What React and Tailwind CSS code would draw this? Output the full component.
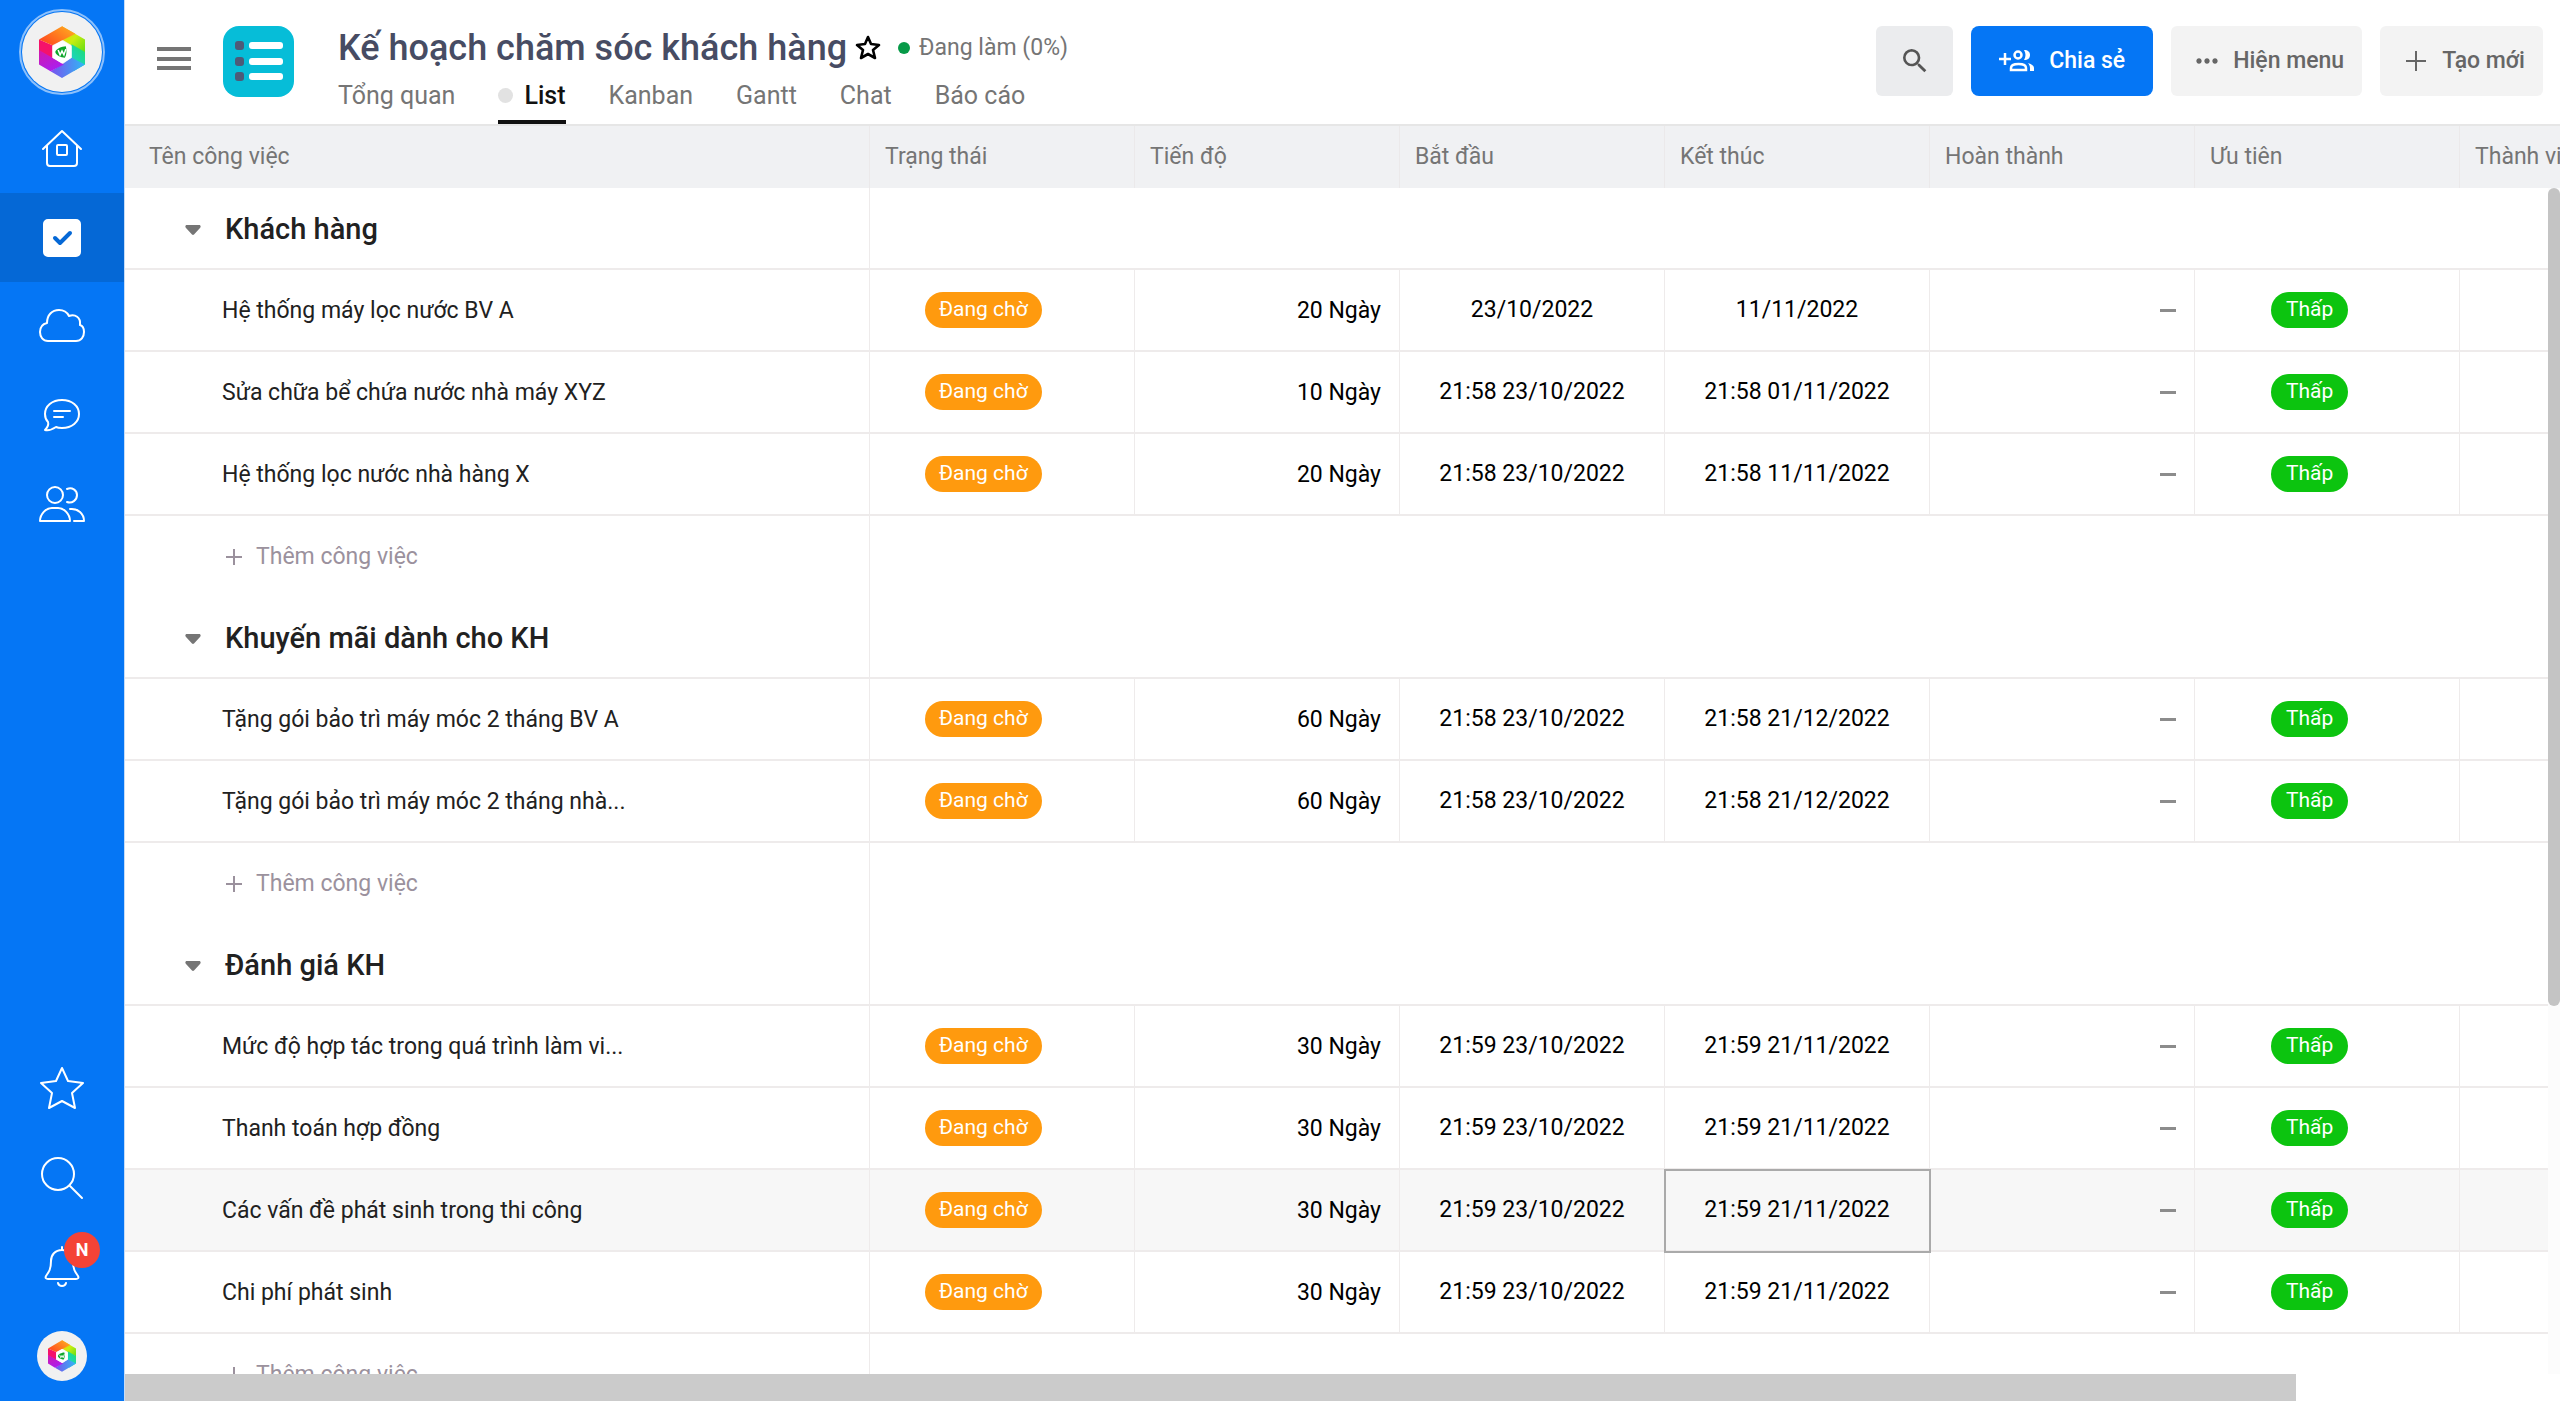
import { useState } from 'react';
import { MdSearch, MdMoreHoriz } from 'react-icons/md';

const columns = ['Trạng thái', 'Tiến độ', 'Bắt đầu', 'Kết thúc', 'Hoàn thành', 'Ưu tiên', 'Thành viên'];

const tabs = ['Tổng quan', 'List', 'Kanban', 'Gantt', 'Chat', 'Báo cáo'];

const groups = [
  {
    title: 'Khách hàng',
    tasks: [
      { name: 'Hệ thống máy lọc nước BV A', days: 20, start: '23/10/2022', end: '11/11/2022' },
      { name: 'Sửa chữa bể chứa nước nhà máy XYZ', days: 10, start: '21:58 23/10/2022', end: '21:58 01/11/2022' },
      { name: 'Hệ thống lọc nước nhà hàng X', days: 20, start: '21:58 23/10/2022', end: '21:58 11/11/2022' },
    ],
  },
  {
    title: 'Khuyến mãi dành cho KH',
    tasks: [
      { name: 'Tặng gói bảo trì máy móc 2 tháng BV A', days: 60, start: '21:58 23/10/2022', end: '21:58 21/12/2022' },
      { name: 'Tặng gói bảo trì máy móc 2 tháng nhà...', days: 60, start: '21:58 23/10/2022', end: '21:58 21/12/2022' },
    ],
  },
  {
    title: 'Đánh giá KH',
    tasks: [
      { name: 'Mức độ hợp tác trong quá trình làm vi...', days: 30, start: '21:59 23/10/2022', end: '21:59 21/11/2022' },
      { name: 'Thanh toán hợp đồng', days: 30, start: '21:59 23/10/2022', end: '21:59 21/11/2022' },
      { name: 'Các vấn đề phát sinh trong thi công', days: 30, start: '21:59 23/10/2022', end: '21:59 21/11/2022', active: true },
      { name: 'Chi phí phát sinh', days: 30, start: '21:59 23/10/2022', end: '21:59 21/11/2022' },
    ],
  },
];

function Logo({ className }) {
  return (
    <svg viewBox="0 0 48 54" className={className} aria-hidden="true">
      <defs>
        <linearGradient id="lg-top" x1="0" y1="1" x2="1" y2="0.3">
          <stop offset="0" stopColor="#ff3d1f" />
          <stop offset="1" stopColor="#ffa51f" />
        </linearGradient>
        <linearGradient id="lg-right" x1="0" y1="0" x2="1" y2="1">
          <stop offset="0" stopColor="#ffc400" />
          <stop offset="0.5" stopColor="#c9ee10" />
          <stop offset="1" stopColor="#5fdc13" />
        </linearGradient>
        <linearGradient id="lg-low" x1="0" y1="1" x2="0.6" y2="0">
          <stop offset="0" stopColor="#19cfe6" />
          <stop offset="1" stopColor="#1fdc7a" />
        </linearGradient>
        <linearGradient id="lg-bottom" x1="0" y1="0" x2="1" y2="0">
          <stop offset="0" stopColor="#7a52ee" />
          <stop offset="1" stopColor="#2fb8f5" />
        </linearGradient>
        <linearGradient id="lg-left" x1="0" y1="0" x2="0.6" y2="1">
          <stop offset="0" stopColor="#d517a8" />
          <stop offset="1" stopColor="#a81ff2" />
        </linearGradient>
      </defs>
      <path d="M0 14 14 20V34L0 26z" fill="#f5126a" />
      <path d="M24 0 48 14V28L34 20 24 14z" fill="url(#lg-right)" />
      <path d="M24 0 38 8 14 20 0 14z" fill="url(#lg-top)" />
      <path d="M48 27V40L36 47 34 34V19z" fill="url(#lg-low)" />
      <path d="M24 54 48 40 34 33 24 40 12 47z" fill="url(#lg-bottom)" />
      <path d="M0 25 14 33 26 40 12 47 0 40z" fill="url(#lg-left)" />
      <path d="M24 15 34 21V33L24 39 14 33V21z" fill="#fff" />
      <path d="M17 27c0-3 7-6 11-6 1 4 1 9-1 12-4 0-10-3-10-6z" fill="#0ea62a" />
      <path d="m20 25 2 5 2-4 2 4 2-6" fill="none" stroke="#fff" strokeWidth="1.6" />
    </svg>
  );
}

function NavIcon({ children }) {
  return (
    <svg viewBox="0 0 48 48" className="size-12" fill="none" stroke="#fff" strokeWidth="2" strokeLinecap="round" strokeLinejoin="round" aria-hidden="true">
      {children}
    </svg>
  );
}

function NavButton({ label, active, children }) {
  return (
    <button
      type="button"
      aria-label={label}
      className={`flex h-[89px] w-full items-center justify-center ${active ? 'bg-[#0568d6]' : ''}`}
    >
      {children}
    </button>
  );
}

function Sidebar() {
  return (
    <nav className="flex w-[125px] shrink-0 flex-col items-center border-r border-[#c5dcf8] bg-[#0576f5]">
      <div className="flex h-[104px] items-center">
        <a href="#home" aria-label="Trang chủ" className="flex size-[86px] items-center justify-center rounded-full border-2 border-[#8cc0fb]">
          <span className="flex size-20 items-center justify-center rounded-full bg-[#f1f1f1]">
            <Logo className="h-[52px] w-[46px]" />
          </span>
        </a>
      </div>

      <NavButton label="Nhà">
        <NavIcon>
          <path d="M5 24 24 6l19 18M9 21v17c0 2 1 3 3 3h24c2 0 3-1 3-3V21" />
          <rect x="19" y="20" width="10" height="10" rx="1" />
        </NavIcon>
      </NavButton>
      <NavButton label="Công việc" active>
        <NavIcon>
          <rect x="6" y="6" width="36" height="36" rx="4" fill="#fff" />
          <path d="m17 24 5 5 10-10" stroke="#0568d6" strokeWidth="4" />
        </NavIcon>
      </NavButton>
      <NavButton label="Lưu trữ">
        <NavIcon>
          <path d="M10 38C5 38 2 34 2 29c0-5 3-8 7-9 0-8 5-13 12-13 5 0 8 2 10 6 6-2 12 1 11 9 3 1 4 4 4 7 0 5-3 9-8 9z" />
        </NavIcon>
      </NavButton>
      <NavButton label="Trò chuyện">
        <NavIcon>
          <path d="M7 38c2-2 4-5 3-8-2-2-3-5-3-8C7 14 14 8 24 8s17 6 17 14-7 14-17 14c-2 0-4 0-6-1-3 2-7 4-11 3z" />
          <path d="M16 19h16M16 25h9" />
        </NavIcon>
      </NavButton>
      <NavButton label="Nhóm">
        <NavIcon>
          <circle cx="17" cy="14" r="8" />
          <path d="M2 40c0-7 6-13 12-13h6c6 0 12 6 12 13zM29 8c5-2 10 1 10 6s-5 9-10 7M32 28c8-1 14 5 14 12H36" />
        </NavIcon>
      </NavButton>

      <div className="mt-auto flex w-full flex-col">
        <NavButton label="Yêu thích">
          <NavIcon>
            <path d="m24 3 6 13 15 2-11 10 3 15-13-7-13 7 3-15L3 18l15-2z" />
          </NavIcon>
        </NavButton>
        <NavButton label="Tìm kiếm">
          <NavIcon>
            <circle cx="20" cy="20" r="16" />
            <path d="m32 32 12 12" />
          </NavIcon>
        </NavButton>
        <NavButton label="Thông báo">
          <span className="relative">
            <NavIcon>
              <path d="M24 4v3M24 7c-7 0-11 5-11 11 0 8-2 11-5 15-1 2 0 3 2 3h28c2 0 3-1 2-3-3-4-5-7-5-15 0-6-4-11-11-11zM20 40c1 4 7 4 8 0" />
            </NavIcon>
            <span className="absolute -top-[11px] left-[26px] flex size-9 items-center justify-center rounded-full bg-[#f44336] text-[18px] font-bold text-white">
              N
            </span>
          </span>
        </NavButton>
        <button type="button" aria-label="Tài khoản" className="flex h-[90px] items-center justify-center">
          <span className="flex size-[50px] items-center justify-center rounded-full bg-[#f1f1f1]">
            <Logo className="h-8 w-7" />
          </span>
        </button>
      </div>
    </nav>
  );
}

function Header({ tab, onTab }) {
  return (
    <header className="flex h-[126px] shrink-0 border-b-2 border-[#e6e6e6] bg-white pl-8 pr-[17px]">
      <button type="button" aria-label="Menu" className="mt-[47px] flex h-[23px] w-[34px] flex-col justify-between">
        <span className="h-1 w-full bg-[#757575]" />
        <span className="h-1 w-full bg-[#757575]" />
        <span className="h-1 w-full bg-[#757575]" />
      </button>

      <svg viewBox="0 0 71 71" className="mt-[26px] ml-8 size-[71px] shrink-0" aria-hidden="true">
        <rect width="71" height="71" rx="16" fill="#06bdd8" />
        {[15, 31, 46].map((y) => (
          <g key={y}>
            <rect x="12" y={y} width="9" height="9" rx="3" fill="#4d5b78" />
            <rect x="26" y={y + 1} width="34" height="7" rx="3" fill="#fff" />
          </g>
        ))}
      </svg>

      <div className="ml-11 flex flex-1 flex-col justify-between pt-[25px]">
        <div className="flex items-center">
          <h1 className="text-[36px] leading-[46px] font-medium text-[#474c63]">Kế hoạch chăm sóc khách hàng</h1>
          <button type="button" aria-label="Đánh dấu" className="ml-2">
            <svg viewBox="0 0 26 26" className="size-[26px]" fill="none" stroke="#000" strokeWidth="2.600" strokeLinejoin="round" aria-hidden="true">
              <path d="m13 2 3 7 8 1-6 5 2 8-7-4-7 4 2-8-6-5 8-1z" />
            </svg>
          </button>
          <span className="ml-[17px] size-3 rounded-full bg-[#079a48]" />
          <span className="ml-[9px] text-[23px] text-[#757575]">Đang làm (0%)</span>
        </div>
        <div className="flex gap-[43px]" role="tablist">
          {tabs.map((name) => (
            <button
              key={name}
              type="button"
              role="tab"
              aria-selected={name === tab}
              onClick={() => onTab(name)}
              className={`flex h-[53px] items-center border-b-4 text-[25px] ${
                name === tab ? 'border-[#111] font-medium text-[#111]' : 'border-transparent text-[#757575]'
              }`}
            >
              {name === tab && <span className="mr-[11px] size-[15px] rounded-full bg-[#e2e2e2]" />}
              {name}
            </button>
          ))}
        </div>
      </div>

      <div className="mt-[26px] flex h-[70px] gap-[18px] text-[23px] font-medium text-[#666]">
        <button type="button" aria-label="Tìm" className="flex w-[77px] items-center justify-center rounded-md bg-[#ebecee]">
          <MdSearch className="size-8 text-[#555]" />
        </button>
        <button type="button" className="flex items-center gap-[14px] rounded-lg bg-[#0576f5] px-7 text-white">
          <svg viewBox="0 0 36 24" className="h-6 w-9" fill="none" stroke="currentColor" strokeWidth="2.500" aria-hidden="true">
            <path d="M6 4v12M0 10h12" />
            <circle cx="19" cy="6" r="3.500" />
            <path d="M12 21v-2c0-3 4-4 7.500-4s7.500 1 7.500 4v2z" />
            <path d="M25 1c4 0 6 2 6 5s-2 5-6 5c2-3 2-7 0-10zM29 14c4 1 6 3 6 5v3h-4v-3c0-2-1-4-2-5z" fill="currentColor" stroke="none" />
          </svg>
          Chia sẻ
        </button>
        <button type="button" className="flex items-center gap-[10px] rounded-md bg-[#f3f3f3] pr-[18px] pl-5">
          <MdMoreHoriz className="size-8" />
          Hiện menu
        </button>
        <button type="button" className="flex items-center gap-4 rounded-md bg-[#f3f3f3] pr-[18px] pl-[26px]">
          <svg viewBox="0 0 20 20" className="size-5" stroke="currentColor" strokeWidth="2" aria-hidden="true">
            <path d="M10 0v20M0 10h20" />
          </svg>
          Tạo mới
        </button>
      </div>
    </header>
  );
}

const cell = 'border-r border-b-2 border-[#eeebeb]';

function TaskRow({ task }) {
  return (
    <tr className={`h-[82px] ${task.active ? 'bg-[#f7f7f7]' : ''}`}>
      <td className={`${cell} pt-[3px] pl-[97px] text-[#212121]`}>{task.name}</td>
      <td className={`${cell} pl-[55px]`}>
        <span className="inline-flex h-9 items-center rounded-full bg-[#ff9a0e] px-[14px] text-[21px] text-white">Đang chờ</span>
      </td>
      <td className={`${cell} pt-[3px] pr-[18px] text-right`}>{task.days} Ngày</td>
      <td className={`${cell} pt-px text-center`}>{task.start}</td>
      <td className={`${cell} pt-px text-center ${task.active ? 'outline-2 -outline-offset-1 outline-[#aaa]' : ''}`}>{task.end}</td>
      <td className={`${cell} pr-[18px]`}>
        <span className="ml-auto block h-[3px] w-4 bg-[#8c8c8c]" />
      </td>
      <td className={`${cell} pl-[76px]`}>
        <span className="inline-flex h-9 items-center rounded-full bg-[#0cc40f] px-[15px] text-[21px] text-white">Thấp</span>
      </td>
      <td className={cell} />
    </tr>
  );
}

function Group({ group }) {
  const [open, setOpen] = useState(true);

  return (
    <tbody>
      <tr className="h-[82px]">
        <td className={`${cell} pt-[3px] pl-[60px]`}>
          <button type="button" onClick={() => setOpen(!open)} aria-expanded={open} className="flex items-center gap-6 text-[29px] font-medium text-[#212121]">
            <svg viewBox="0 0 16 10" className="h-[10px] w-4" fill="#757575" aria-hidden="true">
              <path d="M2 0h12c2 0 2 2 1 3L9 9.500c-.5.600-1.500.600-2 0L1 3C0 2 0 0 2 0z" />
            </svg>
            {group.title}
          </button>
        </td>
        <td colSpan={7} className="border-b-2 border-[#eeebeb]" />
      </tr>
      {open && group.tasks.map((task) => <TaskRow key={task.name} task={task} />)}
      <tr className="h-[81px]">
        <td className="border-r border-[#eeebeb] pt-px pl-[101px]">
          <button type="button" className="flex items-center gap-[14px] text-[#9b919d]">
            <svg viewBox="0 0 16 16" className="size-4" stroke="currentColor" strokeWidth="2" aria-hidden="true">
              <path d="M8 0v16M0 8h16" />
            </svg>
            Thêm công việc
          </button>
        </td>
        <td colSpan={7} />
      </tr>
    </tbody>
  );
}

export default function App() {
  const [tab, setTab] = useState('List');

  return (
    <div className="flex h-screen overflow-hidden bg-white font-['Roboto',sans-serif] text-[23px] text-black">
      <Sidebar />
      <main className="flex min-w-0 flex-1 flex-col">
        <Header tab={tab} onTab={setTab} />

        <div className="relative min-h-0 flex-1 overflow-hidden">
          <table className="w-[2600px] table-fixed border-separate border-spacing-0">
            <thead>
              <tr className="h-[62px] bg-[#f0f1f3] text-left text-[#757575]">
                <th className="w-[745px] border-r border-[#ebe9ea] pl-6 font-normal">Tên công việc</th>
                {columns.map((name) => (
                  <th key={name} className="w-[265px] border-r border-[#ebe9ea] pl-[15px] font-normal">
                    {name}
                  </th>
                ))}
              </tr>
            </thead>
            {groups.map((group) => (
              <Group key={group.title} group={group} />
            ))}
          </table>

          {/* vertical scrollbar */}
          <div className="absolute top-[62px] right-0 bottom-0 w-3 bg-[#fcfcfc]">
            <div className="h-[69%] rounded-full bg-[#c4c4c4]" />
          </div>
        </div>

        {/* horizontal scrollbar */}
        <div className="h-[27px] shrink-0 bg-white pr-[264px]">
          <div className="h-full bg-[#cbcbcb]" />
        </div>
      </main>
    </div>
  );
}
